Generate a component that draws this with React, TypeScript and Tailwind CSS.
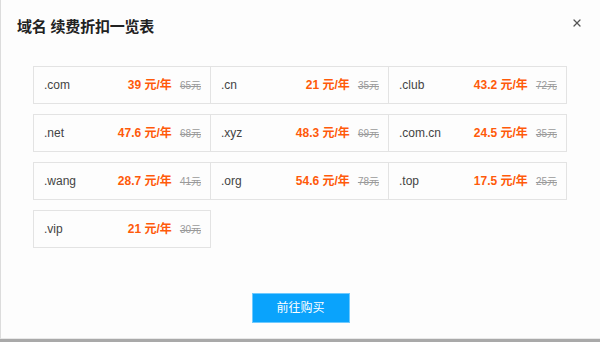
import { X } from 'lucide-react';

const PRICES = [
  { name: '.com', price: '39', old: '65' },
  { name: '.cn', price: '21', old: '35' },
  { name: '.club', price: '43.2', old: '72' },
  { name: '.net', price: '47.6', old: '68' },
  { name: '.xyz', price: '48.3', old: '69' },
  { name: '.com.cn', price: '24.5', old: '35' },
  { name: '.wang', price: '28.7', old: '41' },
  { name: '.org', price: '54.6', old: '78' },
  { name: '.top', price: '17.5', old: '25' },
  { name: '.vip', price: '21', old: '30' },
];

export default function App() {
  return (
    <div
      className="w-[600px] h-[342px] bg-[#a9a9a9] overflow-hidden"
      style={{ fontFamily: '"Liberation Sans", "Noto Sans CJK SC", sans-serif' }}
    >
      {/* dialog */}
      <div className="relative h-[339px] bg-[#fdfdfd] border-l border-[#dcdcdc] border-b border-b-[#e8e8e8]">
        <div className="flex items-center justify-between pl-[16px] pr-[17px] pt-[16px] h-[37px]">
          <h2 className="text-[15px] font-bold text-[#222] leading-none tracking-[-0.2px]">域名 续费折扣一览表</h2>
          <button className="text-[#555] -mt-[8px]">
            <X size={12} strokeWidth={2.6} />
          </button>
        </div>

        {/* price table */}
        <div className="grid grid-cols-[178px_178px_178px] gap-y-[10px] ml-[32px] mt-[29px]">
          {PRICES.map((p, i) => (
            <div
              key={p.name}
              className={`h-[38px] flex items-center justify-between border border-[#e3e3e3] pl-[10px] pr-[9px] ${i % 3 !== 0 ? '-ml-px' : ''}`}
            >
              <span className="text-[12px] text-[#444]">{p.name}</span>
              <span className="flex items-center gap-[8px]">
                <span className="text-[12px] font-bold text-[#ff5a0a]">{p.price} 元/年</span>
                <span className="text-[10px] text-[#9a9a9a] line-through">{p.old}元</span>
              </span>
            </div>
          ))}
        </div>

        {/* footer */}
        <div className="absolute left-0 right-0 top-[293px] flex justify-center">
          <button className="w-[98px] h-[30px] bg-[#0aa3fc] text-white text-[12px] border border-[#6fcaff]">
            前往购买
          </button>
        </div>
      </div>
    </div>
  );
}
